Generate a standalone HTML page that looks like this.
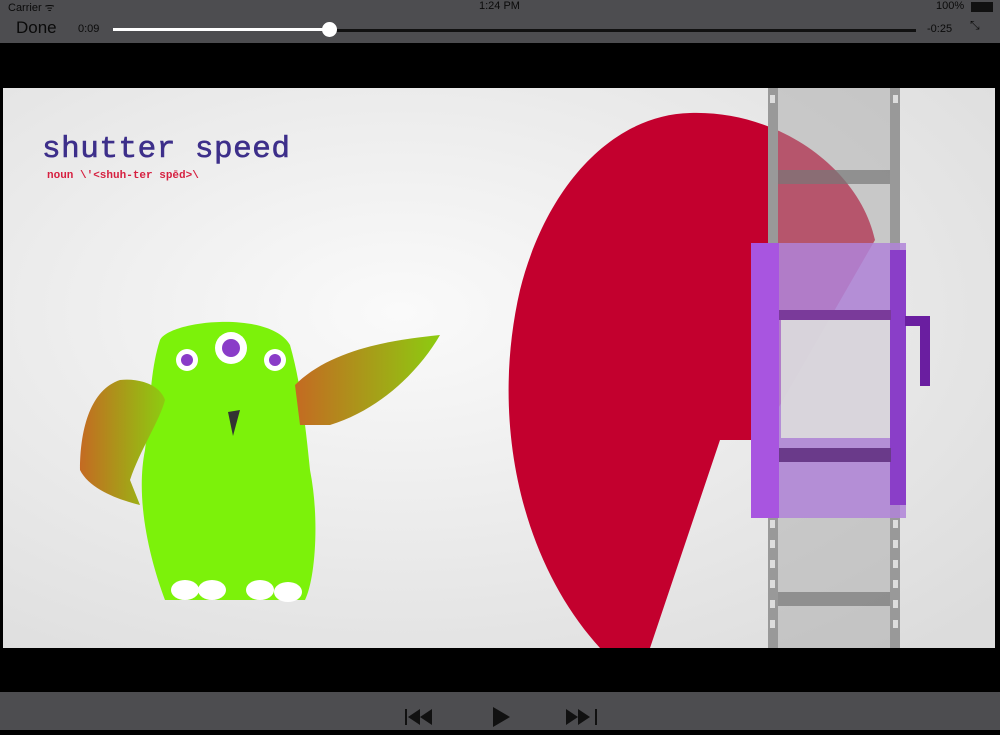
<!DOCTYPE html>
<html><head><meta charset="utf-8"><style>
body{margin:0;width:1000px;height:730px;overflow:hidden;background:#000;font-family:"Liberation Sans",sans-serif;position:relative}
.top{position:absolute;left:0;top:0;width:1000px;height:43px;background:#4d4d50}
.bot{position:absolute;left:0;top:692px;width:1000px;height:38px;background:#4d4d50}
.t{position:absolute;color:#0a0a0a;white-space:nowrap}
</style></head><body>
<div class="top">
<div class="t" style="left:8px;top:0;font-size:11px">Carrier ᯤ</div>
<div class="t" style="left:479px;top:0;font-size:11px">1:24 PM</div>
<div class="t" style="left:936px;top:0;font-size:11px">100%</div>
<div style="position:absolute;left:971px;top:2px;width:20px;height:8px;background:#111;border:1px solid #111"></div>
<div class="t" style="left:16px;top:18px;font-size:17px">Done</div>
<div class="t" style="left:78px;top:23px;font-size:11px">0:09</div>
<div style="position:absolute;left:113px;top:28px;width:218px;height:3px;background:#fff"></div>
<div style="position:absolute;left:331px;top:29px;width:585px;height:3px;background:#111"></div>
<div style="position:absolute;left:322px;top:22px;width:15px;height:15px;border-radius:50%;background:#fff"></div>
<div class="t" style="left:927px;top:23px;font-size:11px">-0:25</div>
<div class="t" style="left:970px;top:18px;font-size:12px">⤡</div>
</div>
<svg style="position:absolute;left:3px;top:88px" width="992" height="560" viewBox="3 88 992 560">
<defs><radialGradient id="bg" cx="0.4" cy="0.4" r="0.8"><stop offset="0" stop-color="#fafafa"/><stop offset="1" stop-color="#dcdcdc"/></radialGradient>
<linearGradient id="arm" x1="0" x2="1"><stop offset="0" stop-color="#c46a22"/><stop offset="1" stop-color="#8ccc10"/></linearGradient></defs>
<rect x="3" y="88" width="992" height="560" fill="url(#bg)"/>
<text x="42" y="157" font-family="Liberation Mono,monospace" font-size="31" fill="#3d2f8a" stroke="#3d2f8a" stroke-width="0.6" textLength="248">shutter speed</text>
<text x="47" y="178" font-family="Liberation Mono,monospace" font-size="11" font-weight="bold" fill="#d62040">noun \'&lt;shuh-ter spēd&gt;\</text>
<path d="M 690 113 C 780 110 860 170 875 240 L 760 440 L 720 440 L 650 648 L 600 648 C 520 560 490 420 520 290 C 545 190 610 115 690 113 Z" fill="#c3002e"/>
<rect x="770" y="88" width="128" height="560" fill="#aaa" opacity="0.5"/>
<rect x="768" y="88" width="10" height="560" fill="#999"/>
<rect x="890" y="88" width="10" height="560" fill="#999"/>
<g fill="#ddd">
<rect x="770" y="95" width="5" height="8"/><rect x="770" y="520" width="5" height="8"/><rect x="770" y="540" width="5" height="8"/><rect x="770" y="560" width="5" height="8"/><rect x="770" y="580" width="5" height="8"/><rect x="770" y="600" width="5" height="8"/><rect x="770" y="620" width="5" height="8"/>
<rect x="893" y="95" width="5" height="8"/><rect x="893" y="520" width="5" height="8"/><rect x="893" y="540" width="5" height="8"/><rect x="893" y="560" width="5" height="8"/><rect x="893" y="580" width="5" height="8"/><rect x="893" y="600" width="5" height="8"/><rect x="893" y="620" width="5" height="8"/>
</g>
<rect x="778" y="170" width="112" height="14" fill="#777" opacity="0.7"/>
<rect x="778" y="592" width="112" height="14" fill="#777" opacity="0.7"/>
<rect x="751" y="243" width="155" height="275" fill="#b084d8" opacity="0.85"/>
<rect x="781" y="318" width="110" height="120" fill="#ddd" opacity="0.9"/>
<rect x="751" y="243" width="28" height="275" fill="#a855e0"/>
<rect x="890" y="250" width="16" height="255" fill="#8a3ec8"/>
<rect x="779" y="310" width="112" height="10" fill="#7a3a9a"/>
<rect x="779" y="448" width="112" height="14" fill="#6a3a8a"/>
<path d="M905 316 H930 V386 H920 V326 H905Z" fill="#6a1ea0"/>
<path d="M160 340 C170 320 270 310 290 345 C300 380 305 420 310 470 C320 520 315 580 305 600 L165 600 C150 560 135 500 145 450 C150 410 150 370 160 340 Z" fill="#7cf20a"/>
<path d="M120 380 C90 390 80 430 80 470 C90 490 120 500 140 505 L130 480 C140 450 160 420 165 400 C160 385 140 378 120 380Z" fill="url(#arm)"/>
<path d="M295 385 C330 350 390 340 440 335 C420 370 380 410 330 425 L300 425 Z" fill="url(#arm)"/>
<circle cx="187" cy="360" r="11" fill="#fff"/><circle cx="187" cy="360" r="6" fill="#8a3cc8"/>
<circle cx="231" cy="348" r="16" fill="#fff"/><circle cx="231" cy="348" r="9" fill="#8a3cc8"/>
<circle cx="275" cy="360" r="11" fill="#fff"/><circle cx="275" cy="360" r="6" fill="#8a3cc8"/>
<path d="M228 412 L240 410 L233 436 Z" fill="#333"/>
<ellipse cx="185" cy="590" rx="14" ry="10" fill="#fff"/><ellipse cx="212" cy="590" rx="14" ry="10" fill="#fff"/>
<ellipse cx="260" cy="590" rx="14" ry="10" fill="#fff"/><ellipse cx="288" cy="592" rx="14" ry="10" fill="#fff"/>
</svg>
<div class="bot">
<svg width="1000" height="38">
<rect x="405" y="17" width="2" height="16" fill="#111"/>
<path d="M420 17 L408 25 L420 33Z M432 17 L420 25 L432 33Z" fill="#111"/>
<path d="M493 15 L510 25 L493 35Z" fill="#111"/>
<path d="M566 17 L578 25 L566 33Z M578 17 L590 25 L578 33Z" fill="#111"/>
<rect x="595" y="17" width="2" height="16" fill="#111"/>
</svg>
</div>
</body></html>
